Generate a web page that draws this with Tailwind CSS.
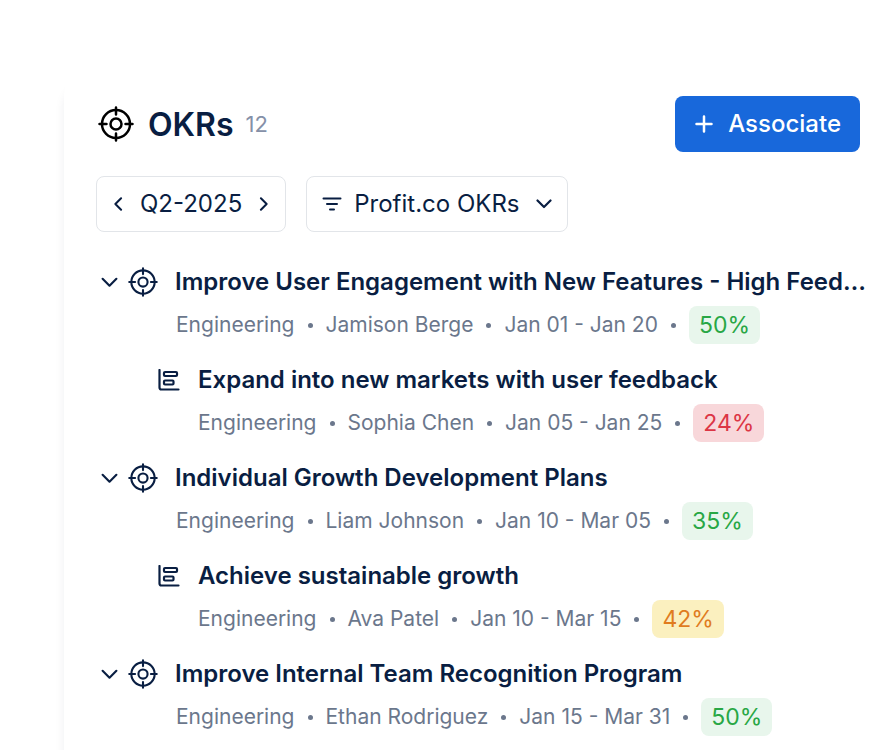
<!DOCTYPE html>
<html lang="en">
<head>
    <meta charset="UTF-8">
    <meta name="viewport" content="width=device-width, initial-scale=1.0">
    <title>OKRs</title>
    <script src="https://cdn.jsdelivr.net/npm/@tailwindcss/browser@4"></script>
</head>
<body class="bg-white font-['Inter',sans-serif] text-[#091e42]">
    <!-- Shared icons -->
    <svg class="hidden">
        <symbol id="target" viewBox="0 0 36 36" fill="none" stroke="currentColor" stroke-linecap="round">
            <circle cx="18" cy="18" r="14"/>
            <circle cx="18" cy="18" r="5.5"/>
            <path d="M18 1.5v7M18 27.5v7M1.5 18h7M27.5 18h7"/>
        </symbol>
        <symbol id="chevron" viewBox="0 0 16 16" fill="none" stroke="currentColor" stroke-linecap="round" stroke-linejoin="round">
            <path d="M1.5 4.500l6.500 6.500 6.500-6.500"/>
        </symbol>
        <symbol id="key-result" viewBox="0 0 22 22" fill="none" stroke="currentColor" stroke-width="2.2" stroke-linecap="round" stroke-linejoin="round">
            <path d="M1.500 1v17.500a2 2 0 0 0 2 2H20.500"/>
            <rect x="6" y="3" width="13" height="4" rx="1"/>
            <rect x="6" y="11.500" width="9.500" height="4" rx="1"/>
        </symbol>
    </svg>

    <div class="flex min-h-screen flex-col pt-[72px] pl-16">
        <main class="grow rounded-tl-3xl pt-6 pr-8 pl-8 shadow-[-1px_12px_10px_rgba(9,30,66,0.06)]">
            <header class="flex items-center justify-between">
                <div class="flex items-center">
                    <svg class="ml-0.5 size-9 text-black" stroke-width="2.5"><use href="#target"/></svg>
                    <h1 class="ml-3.5 pt-0.5 text-[32px] leading-10 font-semibold">OKRs</h1>
                    <span class="ml-3 text-[22px] text-[#8590a8]">12</span>
                </div>
                <button type="button" class="flex h-14 items-center rounded-lg bg-[#1868db] px-[19px] text-2xl font-medium text-white">
                    <svg class="mr-3.5 size-5" viewBox="0 0 20 20" fill="none" stroke="currentColor" stroke-width="2.5" stroke-linecap="round"><path d="M10 2.500v15M2.500 10h15"/></svg>
                    Associate
                </button>
            </header>

            <div class="mt-6 flex gap-5">
                <div class="flex h-14 items-center rounded-lg border border-[#e2e5e9] px-[13px] text-2xl">
                    <button type="button" aria-label="Previous quarter" class="flex size-4 items-center justify-center"><svg class="size-3.5 rotate-90" stroke-width="2.3"><use href="#chevron"/></svg></button>
                    <span class="mx-3.5">Q2-2025</span>
                    <button type="button" aria-label="Next quarter" class="flex size-4 items-center justify-center"><svg class="size-3.5 -rotate-90" stroke-width="2.3"><use href="#chevron"/></svg></button>
                </div>
                <button type="button" class="flex h-14 items-center rounded-lg border border-[#e2e5e9] px-[15px] text-2xl">
                    <svg class="mr-3 size-5" viewBox="0 0 20 20" fill="none" stroke="currentColor" stroke-width="2" stroke-linecap="round"><path d="M1.500 4.500h17M5 10h10M8 15.500h4"/></svg>
                    Profit.co OKRs
                    <svg class="ml-4 size-4" stroke-width="2.2"><use href="#chevron"/></svg>
                </button>
            </div>

            <ul class="mt-8 space-y-[18px]">
                <li class="pl-[5px]">
                    <div class="flex h-9 items-center">
                        <button type="button" aria-label="Collapse" class="flex"><svg class="size-[17px]" stroke-width="2"><use href="#chevron"/></svg></button>
                        <svg class="ml-2.5 size-[30px] shrink-0" stroke-width="2.5"><use href="#target"/></svg>
                        <h2 class="ml-[17px] text-2xl font-semibold whitespace-nowrap">Improve User Engagement with New Features - High Feed…</h2>
                    </div>
                    <div class="mt-1.5 ml-[75px] flex h-[38px] items-center gap-[13px] text-[21px] whitespace-nowrap text-[#6b778c]">
                        <span>Engineering</span><span class="size-[5px] rounded-full bg-[#6b778c]"></span>
                        <span>Jamison Berge</span><span class="size-[5px] rounded-full bg-[#6b778c]"></span>
                        <span>Jan 01 - Jan 20</span><span class="size-[5px] rounded-full bg-[#6b778c]"></span>
                        <span class="rounded-lg bg-[#e8f6ec] px-2.5 text-[23px] leading-[38px] text-[#28a745]">50%</span>
                    </div>
                </li>
                <li class="pl-[62px]">
                    <div class="flex h-9 items-center">
                        <svg class="size-[22px] shrink-0"><use href="#key-result"/></svg>
                        <h2 class="ml-[18px] text-2xl font-semibold whitespace-nowrap">Expand into new markets with user feedback</h2>
                    </div>
                    <div class="mt-1.5 ml-10 flex h-[38px] items-center gap-[13px] text-[21px] whitespace-nowrap text-[#6b778c]">
                        <span>Engineering</span><span class="size-[5px] rounded-full bg-[#6b778c]"></span>
                        <span>Sophia Chen</span><span class="size-[5px] rounded-full bg-[#6b778c]"></span>
                        <span>Jan 05 - Jan 25</span><span class="size-[5px] rounded-full bg-[#6b778c]"></span>
                        <span class="rounded-lg bg-[#f8d7da] px-2.5 text-[23px] leading-[38px] text-[#dc3545]">24%</span>
                    </div>
                </li>
                <li class="pl-[5px]">
                    <div class="flex h-9 items-center">
                        <button type="button" aria-label="Collapse" class="flex"><svg class="size-[17px]" stroke-width="2"><use href="#chevron"/></svg></button>
                        <svg class="ml-2.5 size-[30px] shrink-0" stroke-width="2.5"><use href="#target"/></svg>
                        <h2 class="ml-[17px] text-2xl font-semibold whitespace-nowrap">Individual Growth Development Plans</h2>
                    </div>
                    <div class="mt-1.5 ml-[75px] flex h-[38px] items-center gap-[13px] text-[21px] whitespace-nowrap text-[#6b778c]">
                        <span>Engineering</span><span class="size-[5px] rounded-full bg-[#6b778c]"></span>
                        <span>Liam Johnson</span><span class="size-[5px] rounded-full bg-[#6b778c]"></span>
                        <span>Jan 10 - Mar 05</span><span class="size-[5px] rounded-full bg-[#6b778c]"></span>
                        <span class="rounded-lg bg-[#e8f6ec] px-2.5 text-[23px] leading-[38px] text-[#28a745]">35%</span>
                    </div>
                </li>
                <li class="pl-[62px]">
                    <div class="flex h-9 items-center">
                        <svg class="size-[22px] shrink-0"><use href="#key-result"/></svg>
                        <h2 class="ml-[18px] text-2xl font-semibold whitespace-nowrap">Achieve sustainable growth</h2>
                    </div>
                    <div class="mt-1.5 ml-10 flex h-[38px] items-center gap-[13px] text-[21px] whitespace-nowrap text-[#6b778c]">
                        <span>Engineering</span><span class="size-[5px] rounded-full bg-[#6b778c]"></span>
                        <span>Ava Patel</span><span class="size-[5px] rounded-full bg-[#6b778c]"></span>
                        <span>Jan 10 - Mar 15</span><span class="size-[5px] rounded-full bg-[#6b778c]"></span>
                        <span class="rounded-lg bg-[#fbf0bf] px-2.5 text-[23px] leading-[38px] text-[#e07c1f]">42%</span>
                    </div>
                </li>
                <li class="pl-[5px]">
                    <div class="flex h-9 items-center">
                        <button type="button" aria-label="Collapse" class="flex"><svg class="size-[17px]" stroke-width="2"><use href="#chevron"/></svg></button>
                        <svg class="ml-2.5 size-[30px] shrink-0" stroke-width="2.5"><use href="#target"/></svg>
                        <h2 class="ml-[17px] text-2xl font-semibold whitespace-nowrap">Improve Internal Team Recognition Program</h2>
                    </div>
                    <div class="mt-1.5 ml-[75px] flex h-[38px] items-center gap-[13px] text-[21px] whitespace-nowrap text-[#6b778c]">
                        <span>Engineering</span><span class="size-[5px] rounded-full bg-[#6b778c]"></span>
                        <span>Ethan Rodriguez</span><span class="size-[5px] rounded-full bg-[#6b778c]"></span>
                        <span>Jan 15 - Mar 31</span><span class="size-[5px] rounded-full bg-[#6b778c]"></span>
                        <span class="rounded-lg bg-[#e8f6ec] px-2.5 text-[23px] leading-[38px] text-[#28a745]">50%</span>
                    </div>
                </li>
            </ul>
        </main>
    </div>
</body>
</html>
